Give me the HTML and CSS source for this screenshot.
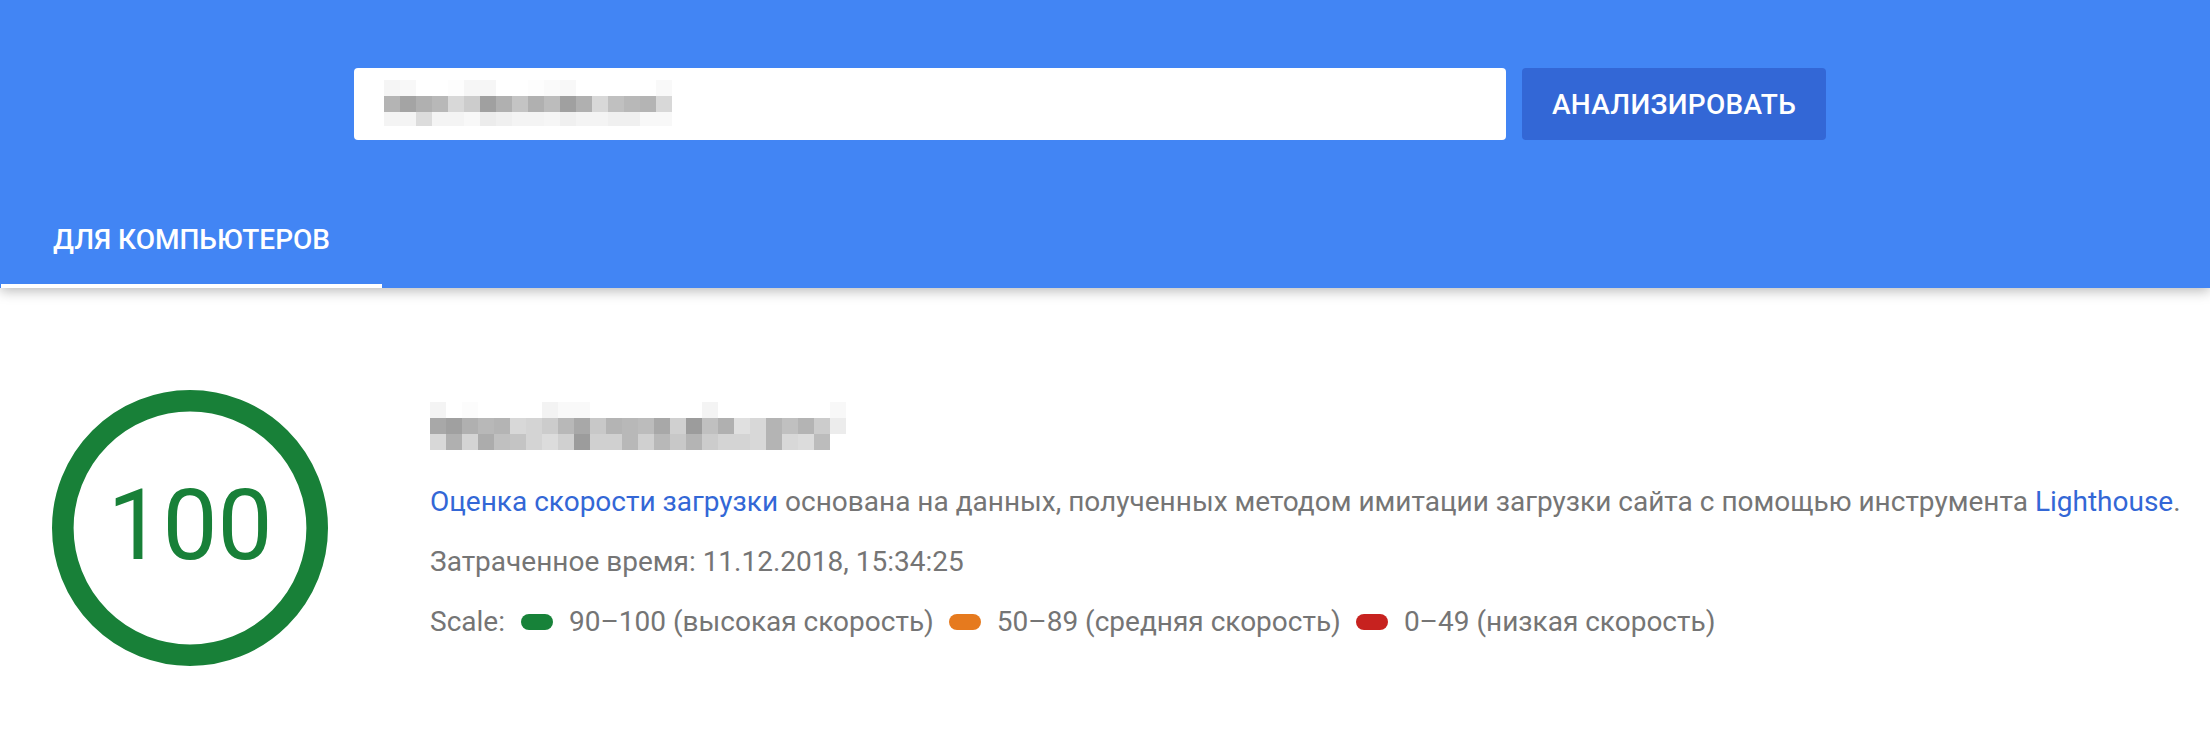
FILE: index.html
```html
<!DOCTYPE html>
<html lang="ru">
<head>
<meta charset="utf-8">
<title>PageSpeed Insights</title>
<link rel="stylesheet" href="styles.css">
</head>
<body>
<header class="header">
  <div class="form-row">
    <div class="url-input">
      <div class="pix pix-url">
        <div class="pix-row r16">
          <i style="background:#f5f5f5"></i><i style="background:#f8f8f8"></i><i style="background:#fff"></i><i style="background:#fff"></i><i style="background:#fdfdfd"></i><i style="background:#f6f6f6"></i><i style="background:#f6f6f6"></i><i style="background:#fff"></i><i style="background:#fff"></i><i style="background:#fdfdfd"></i><i style="background:#fafafa"></i><i style="background:#f8f8f8"></i><i style="background:#fff"></i><i style="background:#fff"></i><i style="background:#fff"></i><i style="background:#fff"></i><i style="background:#fff"></i><i style="background:#f9f9f9"></i>
        </div>
        <div class="pix-row r16">
          <i style="background:#b4b4b4"></i><i style="background:#a4a4a4"></i><i style="background:#b0b0b0"></i><i style="background:#b8b8b8"></i><i style="background:#d8d8d8"></i><i style="background:#cccccc"></i><i style="background:#a0a0a0"></i><i style="background:#b0b0b0"></i><i style="background:#c4c4c4"></i><i style="background:#b0b0b0"></i><i style="background:#bcbcbc"></i><i style="background:#a0a0a0"></i><i style="background:#b0b0b0"></i><i style="background:#d8d8d8"></i><i style="background:#c0c0c0"></i><i style="background:#b8b8b8"></i><i style="background:#b4b4b4"></i><i style="background:#d8d8d8"></i>
        </div>
        <div class="pix-row r14">
          <i style="background:#f4f4f4"></i><i style="background:#f4f4f4"></i><i style="background:#dcdcdc"></i><i style="background:#f4f4f4"></i><i style="background:#f4f4f4"></i><i style="background:#f8f8f8"></i><i style="background:#ececec"></i><i style="background:#f0f0f0"></i><i style="background:#f4f4f4"></i><i style="background:#f4f4f4"></i><i style="background:#f6f6f6"></i><i style="background:#f0f0f0"></i><i style="background:#f4f4f4"></i><i style="background:#f4f4f4"></i><i style="background:#f0f0f0"></i><i style="background:#f0f0f0"></i><i style="background:#f8f8f8"></i><i style="background:#f8f8f8"></i>
        </div>
      </div>
    </div>
    <button class="analyze-btn" type="button">АНАЛИЗИРОВАТЬ</button>
  </div>
  <nav class="tabs">
    <div class="tab active">ДЛЯ КОМПЬЮТЕРОВ</div>
  </nav>
</header>

<main class="result">
  <div class="gauge">
    <svg class="gauge-svg" width="276" height="276" viewBox="0 0 276 276">
      <circle cx="138" cy="138" r="127.2" fill="none" stroke="#188038" stroke-width="21.6"/>
    </svg>
    <div class="gauge-value">100</div>
  </div>
  <div class="summary">
    <div class="pix pix-title">
      <div class="pix-row r16">
        <i style="background:#f4f4f4"></i><i style="background:#fff"></i><i style="background:#fcfcfc"></i><i style="background:#fff"></i><i style="background:#fff"></i><i style="background:#fff"></i><i style="background:#fff"></i><i style="background:#f3f3f3"></i><i style="background:#f9f9f9"></i><i style="background:#f9f9f9"></i><i style="background:#fff"></i><i style="background:#fff"></i><i style="background:#fff"></i><i style="background:#fff"></i><i style="background:#fff"></i><i style="background:#fff"></i><i style="background:#fff"></i><i style="background:#f4f4f4"></i><i style="background:#fff"></i><i style="background:#fff"></i><i style="background:#fff"></i><i style="background:#fff"></i><i style="background:#fff"></i><i style="background:#fff"></i><i style="background:#fff"></i><i style="background:#f8f8f8"></i>
      </div>
      <div class="pix-row r16">
        <i style="background:#a8a8a8"></i><i style="background:#a0a0a0"></i><i style="background:#b0b0b0"></i><i style="background:#b8b8b8"></i><i style="background:#b4b4b4"></i><i style="background:#d8d8d8"></i><i style="background:#d4d4d4"></i><i style="background:#cccccc"></i><i style="background:#b8b8b8"></i><i style="background:#a8a8a8"></i><i style="background:#c8c8c8"></i><i style="background:#b4b4b4"></i><i style="background:#b8b8b8"></i><i style="background:#bcbcbc"></i><i style="background:#a8a8a8"></i><i style="background:#d0d0d0"></i><i style="background:#9c9c9c"></i><i style="background:#c0c0c0"></i><i style="background:#b0b0b0"></i><i style="background:#e0e0e0"></i><i style="background:#d8d8d8"></i><i style="background:#b4b4b4"></i><i style="background:#c0c0c0"></i><i style="background:#b4b4b4"></i><i style="background:#cccccc"></i><i style="background:#ececec"></i>
      </div>
      <div class="pix-row r16">
        <i style="background:#d8d8d8"></i><i style="background:#b0b0b0"></i><i style="background:#d4d4d4"></i><i style="background:#acacac"></i><i style="background:#c0c0c0"></i><i style="background:#c4c4c4"></i><i style="background:#d4d4d4"></i><i style="background:#dcdcdc"></i><i style="background:#d0d0d0"></i><i style="background:#9c9c9c"></i><i style="background:#d0d0d0"></i><i style="background:#d0d0d0"></i><i style="background:#b8b8b8"></i><i style="background:#d0d0d0"></i><i style="background:#b8b8b8"></i><i style="background:#c8c8c8"></i><i style="background:#b4b4b4"></i><i style="background:#cccccc"></i><i style="background:#d4d4d4"></i><i style="background:#d4d4d4"></i><i style="background:#d8d8d8"></i><i style="background:#b4b4b4"></i><i style="background:#d8d8d8"></i><i style="background:#dcdcdc"></i><i style="background:#bcbcbc"></i>
      </div>
    </div>
    <p class="line line-desc"><a class="link" href="#">Оценка скорости загрузки</a> основана на данных, полученных методом имитации загрузки сайта с помощью инструмента <a class="link" href="#">Lighthouse</a>.</p>
    <p class="line">Затраченное время: 11.12.2018, 15:34:25</p>
    <div class="line legend">
      <span class="legend-label">Scale:</span>
      <span class="legend-item"><span class="pill pill-fast"></span>90–100 (высокая скорость)</span>
      <span class="legend-item"><span class="pill pill-average"></span>50–89 (средняя скорость)</span>
      <span class="legend-item"><span class="pill pill-slow"></span>0–49 (низкая скорость)</span>
    </div>
  </div>
</main>
</body>
</html>
```

FILE: styles.css
```css
* { box-sizing: border-box; }
html, body {
  margin: 0;
  padding: 0;
  background: #ffffff;
  font-family: Roboto, "Noto Sans", "Liberation Sans", sans-serif;
}
.header {
  background: #4285f4;
  height: 288px;
  padding-top: 68px;
  box-shadow: 0 3px 12px rgba(0, 0, 0, 0.28);
  position: relative;
}
.form-row {
  display: flex;
  gap: 16px;
  padding-left: 354px;
  height: 72px;
}
.url-input {
  width: 1152px;
  height: 72px;
  background: #ffffff;
  border-radius: 4px;
  padding: 12px 0 0 30px;
}
.pix { display: flex; flex-direction: column; }
.pix-row { display: flex; }
.pix-row i { display: block; width: 16px; }
.pix-row.r16 i { height: 16px; }
.pix-row.r14 i { height: 14px; }
.analyze-btn {
  width: 304px;
  height: 72px;
  border: none;
  border-radius: 4px;
  background: #3367d6;
  color: #ffffff;
  font-family: Roboto, "Noto Sans", sans-serif;
  font-size: 28px;
  font-weight: 500;
  letter-spacing: 0.3px;
  padding: 0;
}
.tabs {
  display: flex;
  margin-top: 52px;
}
.tab {
  width: 382px;
  height: 96px;
  display: flex;
  align-items: center;
  justify-content: center;
  color: #ffffff;
  font-size: 28px;
  font-weight: 500;
  padding-top: 2px;
}
.tab.active {
  border-bottom: 4px solid #ffffff;
  margin-left: 1px;
  width: 381px;
}
.result {
  display: flex;
  padding: 102px 0 0 52px;
}
.gauge {
  width: 276px;
  height: 276px;
  position: relative;
  flex: none;
}
.gauge-svg { display: block; }
.gauge-value {
  position: absolute;
  inset: 0;
  display: flex;
  align-items: center;
  justify-content: center;
  color: #188038;
  font-size: 98px;
  font-weight: 400;
  padding-bottom: 6px;
}
.summary {
  margin-left: 102px;
  padding-top: 12px;
  color: #757575;
  font-size: 28px;
}
.pix-title { margin-bottom: 32px; }
.line {
  margin: 0;
  height: 60px;
  line-height: 40px;
}
.link {
  color: #3367d6;
  text-decoration: none;
}
.legend {
  display: flex;
  align-items: center;
  height: 40px;
  gap: 15px;
}
.legend-label { margin-right: 1px; }
.legend-item {
  display: flex;
  align-items: center;
  gap: 16px;
}
.pill {
  display: block;
  width: 32px;
  height: 16px;
  border-radius: 8px;
}
.pill-fast { background: #178239; }
.pill-average { background: #e67a1e; }
.pill-slow { background: #c7221f; }
```
